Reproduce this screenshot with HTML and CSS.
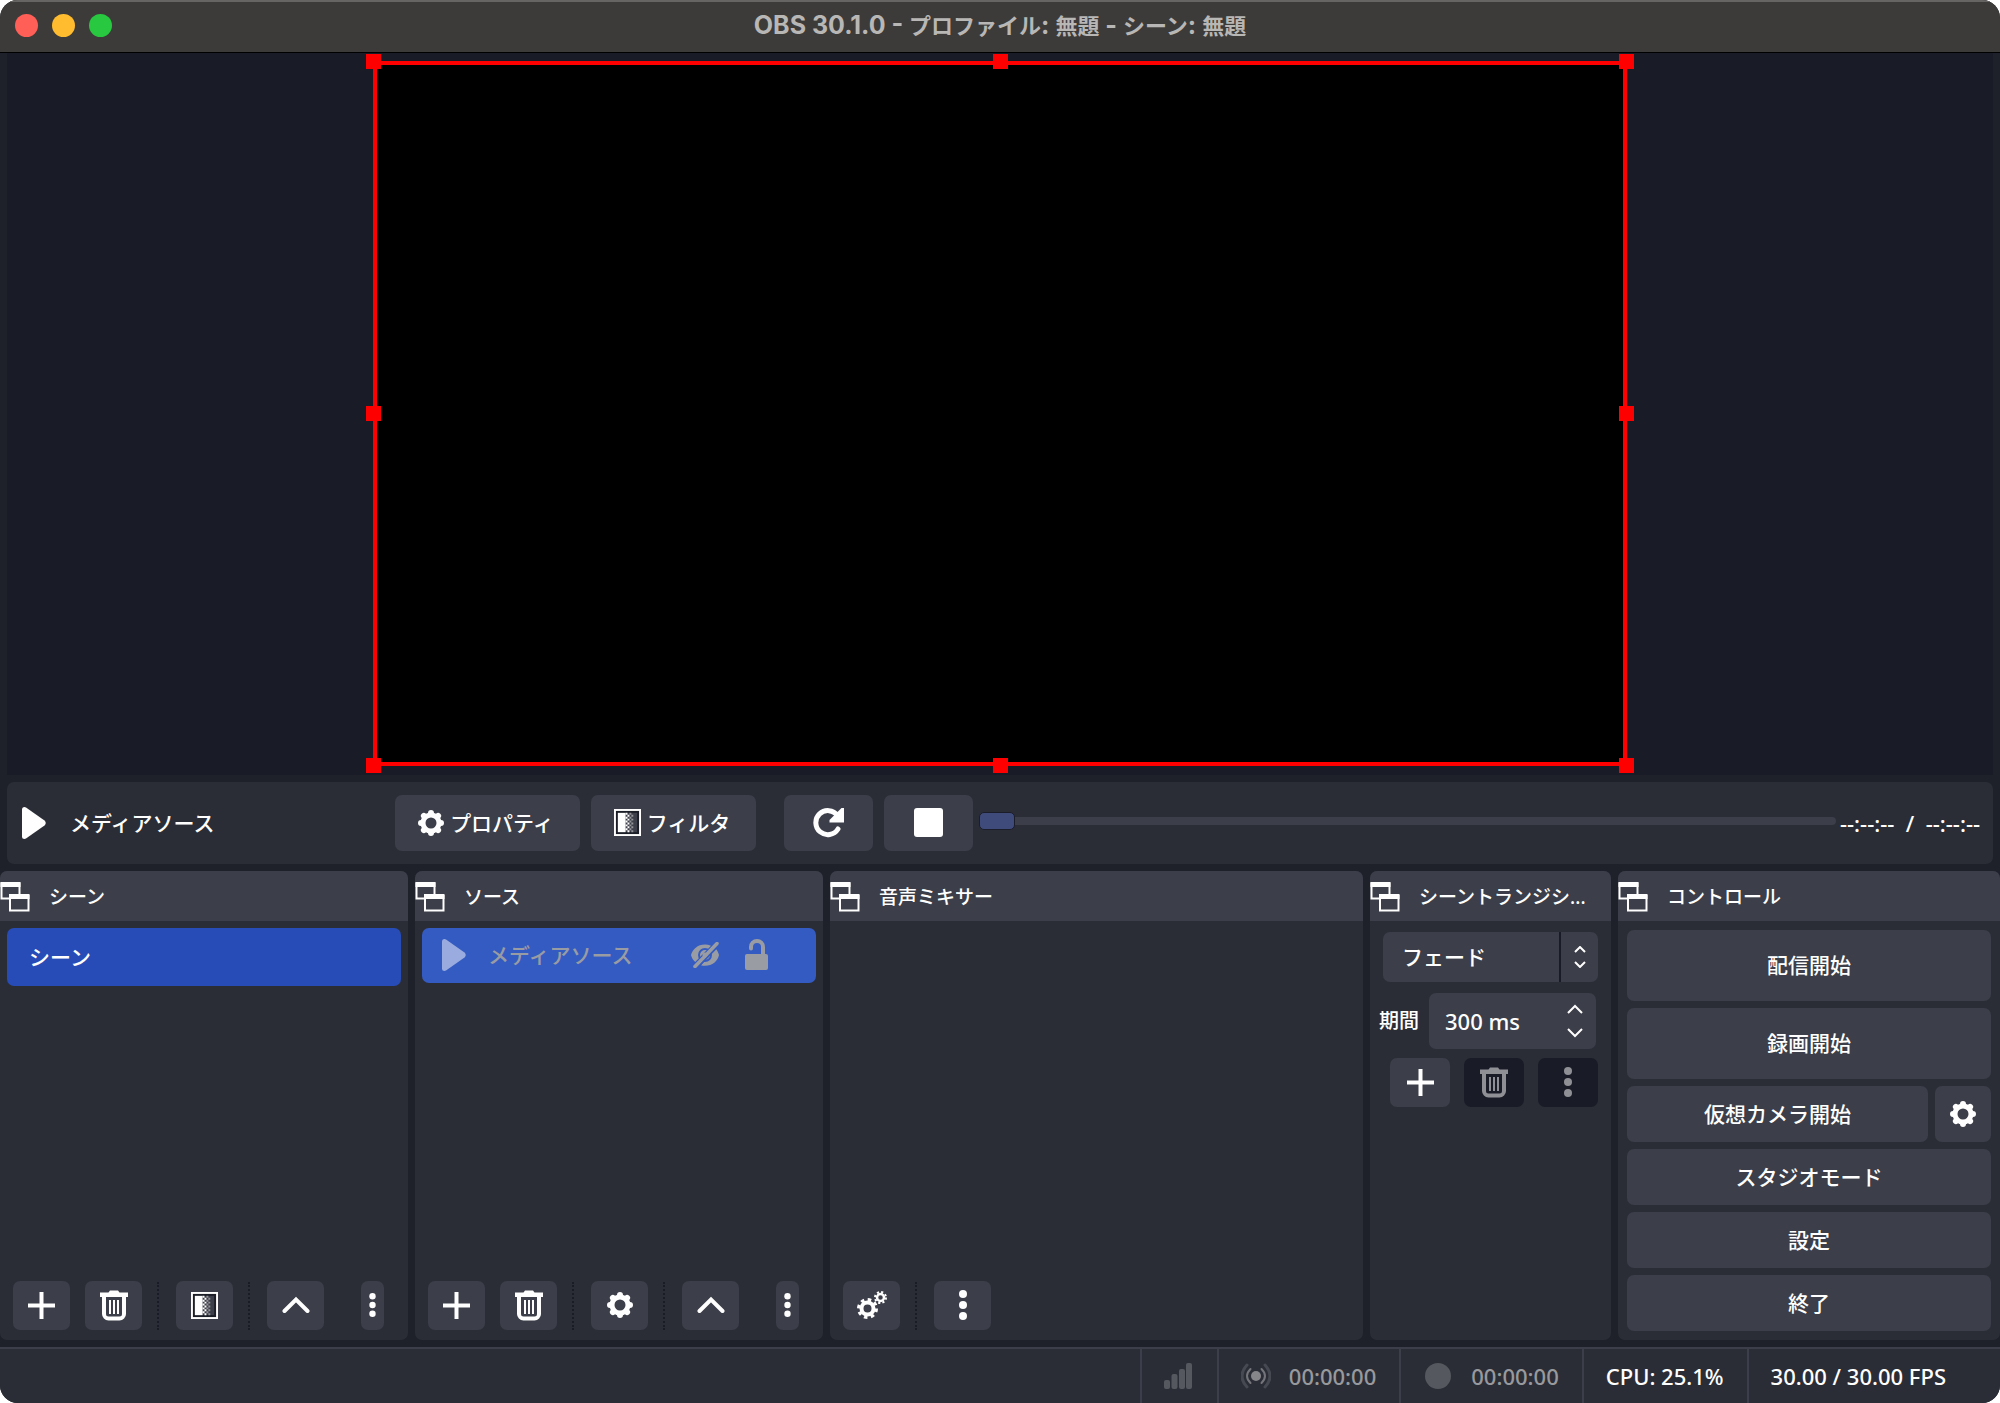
FILE: index.html
```html
<!DOCTYPE html>
<html lang="ja">
<head>
<meta charset="utf-8">
<meta name="viewport" content="width=device-width, initial-scale=1">
<title>OBS 30.1.0 - プロファイル: 無題 - シーン: 無題</title>
<link rel="stylesheet" href="styles.css">
</head>
<body>
<svg class="sprite" aria-hidden="true">
  <symbol id="i-gear" viewBox="0 0 26 26">
    <circle cx="13" cy="13" r="8" fill="none" stroke="currentColor" stroke-width="5"/>
    <g stroke="currentColor" stroke-width="6" stroke-linecap="round">
      <path d="M13 3v1M13 22v1M3 13h1M22 13h1M5.900 5.900l.7.7M19.400 19.400l.7.7M20.100 5.900l-.7.7M6.600 19.400l-.7.7"/>
    </g>
  </symbol>
  <symbol id="i-gears" viewBox="0 0 30 30">
    <g fill="none" stroke="currentColor">
      <circle cx="10.500" cy="18.500" r="6" stroke-width="4"/>
      <circle cx="10.500" cy="18.500" r="9" stroke-width="3" stroke-dasharray="3.530 3.530"/>
      <circle cx="23.500" cy="7.500" r="3.500" stroke-width="2.500"/>
      <circle cx="23.500" cy="7.500" r="5.500" stroke-width="2" stroke-dasharray="2.160 2.160"/>
    </g>
  </symbol>
  <symbol id="i-filter" viewBox="0 0 28 28">
    <rect x="1" y="1" width="26" height="26" fill="#1b1d27" stroke="currentColor" stroke-width="2"/>
    <rect x="4" y="4" width="20" height="20" fill="#3c3e49"/>
    <rect x="4" y="4" width="8" height="20" fill="currentColor"/>
    <g stroke="currentColor" stroke-width="2" stroke-dasharray="2 2">
      <path d="M13 4v20M15 6v18"/><path d="M17 4v20M19 6v18" opacity=".45"/>
    </g>
  </symbol>
  <symbol id="i-plus" viewBox="0 0 27 27">
    <path d="M13.500 0v27M0 13.500h27" stroke="currentColor" stroke-width="4"/>
  </symbol>
  <symbol id="i-trash" viewBox="0 0 28 31">
    <path d="M0 2.500h8.500L10 .5h8l1.500 2H28V7H0z" fill="currentColor"/>
    <path d="M4 7v17a4.500 4.500 0 0 0 4.500 4.500h11A4.500 4.500 0 0 0 24 24V7" fill="none" stroke="currentColor" stroke-width="4"/>
    <path d="M10 10v14M14 10v14M18 10v14" stroke="currentColor" stroke-width="2"/>
  </symbol>
  <symbol id="i-up" viewBox="0 0 28 18">
    <path d="M2.500 15L14 3.500 25.500 15" fill="none" stroke="currentColor" stroke-width="4" stroke-linecap="round"/>
  </symbol>
  <symbol id="i-dots" viewBox="0 0 8 30">
    <circle cx="4" cy="4" r="4" fill="currentColor"/><circle cx="4" cy="15" r="4" fill="currentColor"/><circle cx="4" cy="26" r="4" fill="currentColor"/>
  </symbol>
  <symbol id="i-play" viewBox="0 0 24 32">
    <path d="M0 2.500Q0 0 2.500 0L4 .6 22.500 13.500Q25 16 22.500 18.500L4 31.400 2.500 32Q0 32 0 29.500z" fill="currentColor"/>
  </symbol>
  <symbol id="i-dock" viewBox="0 0 30 30">
    <path d="M9.500 16.500h-8v-15h18v11" fill="none" stroke="currentColor" stroke-width="2"/>
    <path d="M0.500 0h20v5h-20zM9 12h20.500v5H9z" fill="currentColor"/>
    <path d="M10 14h18.500v14.500H10z" fill="none" stroke="currentColor" stroke-width="2"/>
  </symbol>
  <symbol id="i-reload" viewBox="0 0 32 30">
    <path d="M24.500 7.500A12 12 0 1 0 25 21" fill="none" stroke="currentColor" stroke-width="5" stroke-linecap="round"/>
    <path d="M31 0v14.500H16.500V12L28.500 0z" fill="currentColor"/>
  </symbol>
  <symbol id="i-hidden" viewBox="0 0 30 26">
    <path d="M15 2.500C7.500 2.500 2.500 7.500 1 13c.7 3 2.200 5.300 4.200 7L21 3.800A17 17 0 0 0 15 2.500zM25.500 6.500L11 23.200c1.300.4 2.600.6 4 .6 7.500 0 12.700-4.800 14-10.800-.6-2.600-1.800-4.800-3.500-6.500z" fill="currentColor"/>
    <circle cx="15" cy="13" r="6" fill="none" stroke="#345bc1" stroke-width="2"/>
    <circle cx="15" cy="13" r="2.500" fill="currentColor"/>
    <path d="M7 26L29 3" stroke="#345bc1" stroke-width="2"/>
    <path d="M5 24.500L27 1.500" stroke="currentColor" stroke-width="3.500" stroke-linecap="round"/>
  </symbol>
  <symbol id="i-unlocked" viewBox="0 0 24 31">
    <path d="M6 9.500V8a6 6 0 0 1 12 0v8" fill="none" stroke="currentColor" stroke-width="4" stroke-linecap="round"/>
    <rect x="0" y="15" width="23" height="16" rx="2" fill="currentColor"/>
  </symbol>
  <symbol id="i-updown" viewBox="0 0 12 22">
    <path d="M1 6l5-5 5 5M1 16l5 5 5-5" fill="none" stroke="currentColor" stroke-width="2"/>
  </symbol>
  <symbol id="i-chev" viewBox="0 0 16 10">
    <path d="M1 9l7-7 7 7" fill="none" stroke="currentColor" stroke-width="2"/>
  </symbol>
</svg>

<div class="window">
  <header class="titlebar">
    <div class="lights">
      <button class="light close" aria-label="閉じる"></button>
      <button class="light minimize" aria-label="しまう"></button>
      <button class="light zoom" aria-label="拡大"></button>
    </div>
    <h1 class="title">OBS 30.1.0 - <span>プロファイル</span>: <span>無題</span> - <span>シーン</span>: <span>無題</span></h1>
  </header>

  <main class="preview">
    <div class="canvas">
      <i class="handle top left"></i><i class="handle top center"></i><i class="handle top right"></i>
      <i class="handle middle left"></i><i class="handle middle right"></i>
      <i class="handle bottom left"></i><i class="handle bottom center"></i><i class="handle bottom right"></i>
    </div>
  </main>

  <section class="context-bar">
    <div class="source-name">
      <svg class="play"><use href="#i-play"/></svg>
      <span>メディアソース</span>
    </div>
    <button class="btn props"><svg class="gear"><use href="#i-gear"/></svg>プロパティ</button>
    <button class="btn filters"><svg class="filter"><use href="#i-filter"/></svg>フィルタ</button>
    <button class="btn media reload" aria-label="再スタート"><svg class="reload-icon"><use href="#i-reload"/></svg></button>
    <button class="btn media" aria-label="停止"><span class="stop"></span></button>
    <input class="seek" type="range" min="0" max="100" value="0" aria-label="再生位置">
    <span class="time">--:--:--&nbsp; /&nbsp; --:--:--</span>
  </section>

  <div class="docks">
    <section class="dock">
      <h2 class="dock-title"><svg class="dock-icon"><use href="#i-dock"/></svg>シーン</h2>
      <ul class="list">
        <li class="item scene">シーン</li>
      </ul>
      <div class="toolbar">
        <button class="btn tool" aria-label="追加"><svg class="plus"><use href="#i-plus"/></svg></button>
        <button class="btn tool" aria-label="削除"><svg class="trash"><use href="#i-trash"/></svg></button>
        <span class="sep"></span>
        <button class="btn tool" aria-label="フィルタ"><svg class="filter"><use href="#i-filter"/></svg></button>
        <span class="sep"></span>
        <button class="btn tool" aria-label="上へ"><svg class="up"><use href="#i-up"/></svg></button>
        <button class="btn more" aria-label="その他"><svg class="dots small"><use href="#i-dots"/></svg></button>
      </div>
    </section>

    <section class="dock">
      <h2 class="dock-title"><svg class="dock-icon"><use href="#i-dock"/></svg>ソース</h2>
      <ul class="list">
        <li class="item source">
          <svg class="play"><use href="#i-play"/></svg>
          <span class="item-name">メディアソース</span>
          <button class="toggle" aria-label="表示"><svg class="eye"><use href="#i-hidden"/></svg></button>
          <button class="toggle" aria-label="ロック"><svg class="lock"><use href="#i-unlocked"/></svg></button>
        </li>
      </ul>
      <div class="toolbar">
        <button class="btn tool" aria-label="追加"><svg class="plus"><use href="#i-plus"/></svg></button>
        <button class="btn tool" aria-label="削除"><svg class="trash"><use href="#i-trash"/></svg></button>
        <span class="sep"></span>
        <button class="btn tool" aria-label="プロパティ"><svg class="gear"><use href="#i-gear"/></svg></button>
        <span class="sep"></span>
        <button class="btn tool" aria-label="上へ"><svg class="up"><use href="#i-up"/></svg></button>
        <button class="btn more" aria-label="その他"><svg class="dots small"><use href="#i-dots"/></svg></button>
      </div>
    </section>

    <section class="dock">
      <h2 class="dock-title"><svg class="dock-icon"><use href="#i-dock"/></svg>音声ミキサー</h2>
      <div class="list"></div>
      <div class="toolbar">
        <button class="btn tool" aria-label="オーディオの詳細"><svg class="gears"><use href="#i-gears"/></svg></button>
        <span class="sep"></span>
        <button class="btn tool" aria-label="メニュー"><svg class="dots"><use href="#i-dots"/></svg></button>
      </div>
    </section>

    <section class="dock">
      <h2 class="dock-title"><svg class="dock-icon"><use href="#i-dock"/></svg>シーントランジシ...</h2>
      <div class="transitions">
        <div class="combo">
          <select aria-label="トランジション"><option>フェード</option></select>
          <span class="combo-arrow"><svg class="updown"><use href="#i-updown"/></svg></span>
        </div>
        <div class="duration">
          <label for="duration">期間</label>
          <div class="spin">
            <input id="duration" type="text" value="300 ms">
            <div class="spin-buttons">
              <button aria-label="増やす"><svg class="chev"><use href="#i-chev"/></svg></button>
              <button aria-label="減らす"><svg class="chev down"><use href="#i-chev"/></svg></button>
            </div>
          </div>
        </div>
        <div class="transition-tools">
          <button class="btn tool" aria-label="追加"><svg class="plus"><use href="#i-plus"/></svg></button>
          <button class="btn tool" disabled aria-label="削除"><svg class="trash"><use href="#i-trash"/></svg></button>
          <button class="btn tool" disabled aria-label="メニュー"><svg class="dots"><use href="#i-dots"/></svg></button>
        </div>
      </div>
    </section>

    <section class="dock">
      <h2 class="dock-title"><svg class="dock-icon"><use href="#i-dock"/></svg>コントロール</h2>
      <div class="controls">
        <button class="btn tall">配信開始</button>
        <button class="btn tall">録画開始</button>
        <div class="split">
          <button class="btn wide">仮想カメラ開始</button>
          <button class="btn square" aria-label="仮想カメラの設定"><svg class="gear"><use href="#i-gear"/></svg></button>
        </div>
        <button class="btn">スタジオモード</button>
        <button class="btn">設定</button>
        <button class="btn">終了</button>
      </div>
    </section>
  </div>

  <footer class="status">
    <div class="cell">
      <svg class="bars" viewBox="0 0 30 26" fill="#56585f"><rect x="0" y="17" width="6" height="9" rx="2"/><rect x="7.500" y="11" width="6" height="15" rx="2"/><rect x="15" y="6" width="6" height="20" rx="2"/><rect x="22" y="0" width="6" height="26" rx="2"/></svg>
    </div>
    <div class="cell dim">
      <svg class="signal" viewBox="0 0 30 26"><circle cx="15" cy="13" r="5" fill="#85868a"/><g fill="none" stroke-width="2" stroke-linecap="round"><path d="M9.500 6q-7 7 0 14M20.500 6q7 7 0 14" stroke="#74757a"/><path d="M6 2q-10 11 0 22M24 2q10 11 0 22" stroke="#464852" stroke-width="3"/></g></svg>
      <span>00:00:00</span>
    </div>
    <div class="cell dim">
      <svg class="signal" viewBox="0 0 30 26"><circle cx="15" cy="13" r="13" fill="#56585f"/></svg>
      <span>00:00:00</span>
    </div>
    <div class="cell">CPU: 25.1%</div>
    <div class="cell fps">30.00 / 30.00 FPS</div>
  </footer>
</div>
</body>
</html>
```
FILE: styles.css
```css
* { box-sizing: border-box; }

:root {
  --base: #1e202a;
  --deep: #191b26;
  --panel: #2b2d36;
  --raised: #3c3e49;
  --blue: #274cb8;
}

body {
  margin: 0;
  background: #fff;
  color: #fefefe;
  font: 500 21px/28px "Noto Sans", "Noto Sans CJK JP", sans-serif;
}

button, input, select { font: inherit; color: inherit; border: 0; margin: 0; padding: 0; }
svg { display: block; flex: none; }
.sprite { position: absolute; width: 0; height: 0; }

.window {
  display: flex;
  flex-direction: column;
  height: 100vh;
  min-height: 960px;
  background: var(--base);
  border-radius: 18px;
  overflow: hidden;
}

/* Title bar */
.titlebar {
  display: grid;
  grid-template-columns: 1fr auto 1fr;
  align-items: center;
  flex: none;
  height: 53px;
  padding: 0 15px 3px;
  background: #3d3b39;
  border-top: 2px solid #676563;
  border-bottom: 1px solid #000;
}
.lights { display: flex; gap: 14px; }
.light { width: 23px; height: 23px; border-radius: 50%; }
.close { background: #ff5f57; }
.minimize { background: #febc2e; }
.zoom { background: #28c840; }
.title {
  margin: 0;
  color: #b8b7b6;
  font: 700 25px/28px Inter, "Noto Sans CJK JP", sans-serif;
}
.title span { font-size: 22px; }

/* Preview */
.preview {
  flex: 1;
  display: flex;
  justify-content: center;
  min-height: 0;
  margin: 0 7px;
  padding: 8px 0 9px;
  background: var(--deep);
}
.canvas {
  position: relative;
  height: 100%;
  aspect-ratio: 16 / 9;
  background: #000;
  border: 4px solid #f00;
}
.handle { position: absolute; width: 15px; height: 15px; background: #f00; }
.handle.top { top: -11px; }
.handle.middle { top: calc(50% - 8px); }
.handle.bottom { bottom: -11px; }
.handle.left { left: -11px; }
.handle.center { left: calc(50% - 7px); }
.handle.right { right: -11px; }

/* Buttons and icons */
.btn {
  display: flex;
  align-items: center;
  justify-content: center;
  height: 56px;
  padding-bottom: 1px;
  background: var(--raised);
  border-radius: 7px;
}
.btn:disabled { background: var(--deep); color: #8f9095; }
.gear { width: 26px; height: 26px; }
.filter { width: 27px; height: 27px; }
.plus { width: 27px; height: 27px; }
.trash { width: 28px; height: 31px; }
.up { width: 28px; height: 18px; }
.dots { width: 8px; height: 30px; }
.dots.small { width: 7px; height: 24px; }
.gears { width: 30px; height: 30px; }
.play { width: 24px; height: 32px; }

/* Source context bar */
.context-bar {
  display: flex;
  align-items: center;
  flex: none;
  height: 82px;
  margin: 7px 7px;
  padding: 0 13px 0 15px;
  background: var(--panel);
  border-radius: 7px;
}
.source-name { display: flex; align-items: center; gap: 24px; width: 373px; }
.props { width: 185px; gap: 6px; margin-right: 11px; padding-right: 3px; }
.filters { width: 165px; gap: 6px; margin-right: 28px; padding-right: 3px; }
.media { width: 89px; }
.reload { margin-right: 11px; }
.reload-icon { width: 32px; height: 30px; }
.stop { width: 29px; height: 29px; background: #fff; border-radius: 3px; }

.seek {
  flex: 1;
  min-width: 60px;
  height: 18px;
  margin: 0 4px 4px 6px;
  background: none;
  -webkit-appearance: none;
  appearance: none;
}
.seek::-webkit-slider-runnable-track { height: 8px; background: var(--raised); border-radius: 4px; }
.seek::-webkit-slider-thumb {
  -webkit-appearance: none;
  width: 36px;
  height: 18px;
  margin-top: -5px;
  background: #3f4b7b;
  border: 1px solid #1b1d2a;
  border-radius: 5px;
}
.time { font-size: 22px; white-space: nowrap; }

/* Docks */
.docks {
  display: grid;
  flex: none;
  grid-template-columns: 408fr 408fr 533fr 241fr 382fr;
  gap: 7px;
}
.dock {
  display: flex;
  flex-direction: column;
  min-width: 0;
  min-height: 469px;
  background: var(--panel);
  border-radius: 7px;
  overflow: hidden;
}
.dock-title {
  display: flex;
  align-items: center;
  gap: 19px;
  height: 50px;
  margin: 0;
  padding-top: 1px;
  background: var(--raised);
  font-size: 19px;
  font-weight: 500;
  white-space: nowrap;
}
.dock-icon { width: 30px; height: 30px; }
.list { flex: 1; margin: 0; padding: 7px; list-style: none; }
.item { display: flex; align-items: center; border-radius: 7px; }
.scene { height: 58px; padding: 0 22px; background: var(--blue); }
.source { height: 55px; padding: 0 47px 2px 20px; background: #345bc1; color: #9a9ca3; }
.source .play { color: #9aabe0; }
.item-name { flex: 1; padding-left: 22px; }
.toggle { background: none; color: inherit; margin-left: 25px; }
.eye { width: 30px; height: 26px; }
.lock { width: 24px; height: 31px; }

.toolbar { display: flex; align-items: center; padding: 0 24px 10px 13px; }
.tool { width: 57px; height: 49px; }
.tool + .tool { margin-left: 15px; }
.sep { width: 2px; height: 48px; margin: 0 17px 0 15px; border-left: 2px dotted #191b26; }
.more { width: 23px; height: 49px; margin-left: auto; }

/* Transitions */
.transitions { display: flex; flex-direction: column; padding: 11px 13px; }
.combo { position: relative; height: 50px; }
.combo select {
  width: 100%;
  height: 100%;
  padding: 0 50px 0 19px;
  background: var(--raised);
  border-radius: 7px;
  -webkit-appearance: none;
  appearance: none;
}
.combo-arrow {
  position: absolute;
  inset: 0 0 0 auto;
  display: grid;
  place-items: center;
  width: 39px;
  border-left: 2px solid var(--deep);
  pointer-events: none;
}
.updown { width: 12px; height: 22px; }
.duration { display: flex; align-items: center; gap: 10px; margin: 11px 2px 9px -4px; }
.duration label { flex: none; font-size: 20px; }
.spin { display: flex; flex: 1; min-width: 0; height: 56px; background: var(--raised); border-radius: 7px; }
.spin input { flex: 1; min-width: 0; padding-left: 16px; background: none; font-size: 22px; }
.spin-buttons { display: flex; flex-direction: column; justify-content: center; gap: 14px; padding-right: 13px; }
.spin-buttons button { background: none; }
.chev { width: 16px; height: 10px; }
.chev.down { transform: rotate(180deg); }
.transition-tools { display: flex; justify-content: flex-end; gap: 14px; }
.transition-tools .tool { width: 60px; margin: 0; }

/* Controls */
.controls { display: flex; flex-direction: column; gap: 7px; padding: 9px; }
.tall { height: 71px; }
.split { display: flex; gap: 7px; }
.wide { flex: 1; }
.square { width: 56px; }

/* Status bar */
.status {
  display: flex;
  justify-content: flex-end;
  flex: none;
  height: 56px;
  margin-top: 7px;
  background: var(--panel);
  border-top: 2px solid var(--raised);
  font-size: 22px;
}
.cell { display: flex; align-items: center; gap: 18px; padding: 0 23px 0 22px; border-left: 2px solid var(--raised); white-space: nowrap; }
.dim { color: #98999c; }
.bars { width: 30px; height: 26px; }
.signal { width: 30px; height: 26px; }
.fps { padding-right: 54px; }
```
